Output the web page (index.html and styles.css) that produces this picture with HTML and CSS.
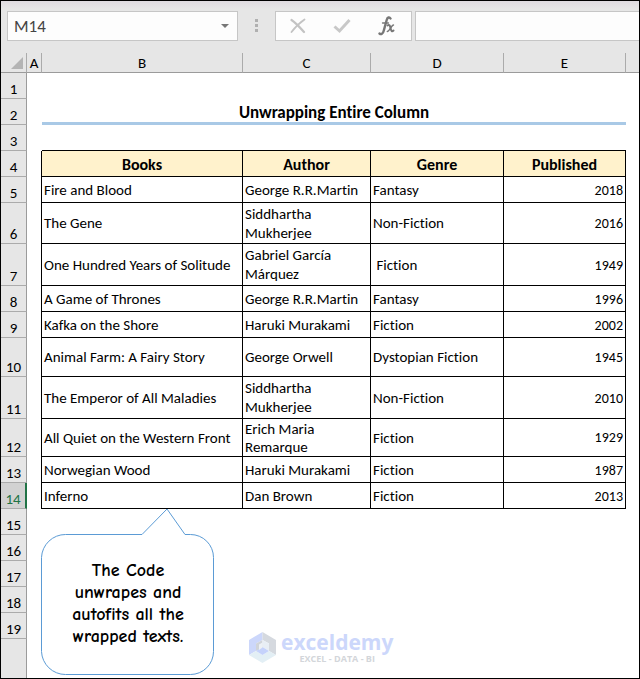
FILE: index.html
```html
<!DOCTYPE html>
<html lang="en">
<head>
<meta charset="utf-8">
<meta name="viewport" content="width=device-width, initial-scale=1">
<title>Unwrapping Entire Column</title>
<link rel="stylesheet" href="styles.css">
</head>
<body>
<main class="workbook">
  <div class="formula-bar">
    <button class="name-box" type="button" aria-label="Name box">
      <span>M14</span>
      <svg width="8" height="4" viewBox="0 0 8 4"><path d="M0 0h8L4 4z" fill="#777"/></svg>
    </button>
    <svg class="grip" width="3" height="13" viewBox="0 0 3 13"><path d="M0 0h3v3H0zM0 5h3v3H0zM0 10h3v3H0z" fill="#b0b0b0"/></svg>
    <div class="actions">
      <button type="button" aria-label="Cancel"><svg width="16" height="16" viewBox="0 0 16 16" fill="none" stroke="#c3c3c3" stroke-linecap="round"><path d="M1.500 2C6 5 10 9.500 14 14" stroke-width="2.200"/><path d="M14.500 1.500C10 4.500 5 9.500 1.500 14" stroke-width="1.800"/></svg></button>
      <button type="button" aria-label="Enter"><svg width="18" height="16" viewBox="0 0 18 16" fill="none" stroke="#c8c8c8"><path d="M1.500 8.500L6.500 13L16.500 2" stroke-width="3"/></svg></button>
      <button type="button" aria-label="Insert function"><svg width="17" height="20" viewBox="0 0 17 20" fill="none" stroke="#777" stroke-linecap="round"><path d="M12.500 2.500C11.500.800 9.500 1 8.700 4L5.800 14.500C5 18 3 18.800 1.500 17.500" stroke-width="2.400"/><path d="M4.500 7H10.500" stroke-width="1.300"/><path d="M9.500 9.500C11.500 8 12 10 12.500 12C13 15 14 16 15.500 14.500" stroke-width="2"/><path d="M15.500 9C13.500 9 11.500 15.500 9.300 15.500" stroke-width="1.400"/></svg></button>
    </div>
    <input class="formula" type="text" aria-label="Formula">
  </div>

  <table class="sheet">
    <colgroup><col class="w-num"><col class="w-a"><col class="w-b"><col class="w-c"><col class="w-d"><col class="w-e"><col></colgroup>
    <thead>
      <tr>
        <th class="corner"><svg width="12" height="12" viewBox="0 0 12 12"><path d="M12 0v12H0z" fill="#b4b4b4"/></svg></th>
        <th scope="col">A</th><th scope="col">B</th><th scope="col">C</th><th scope="col">D</th><th scope="col">E</th><th class="last"></th>
      </tr>
    </thead>
    <tbody>
      <tr><th scope="row">1</th><td colspan="6"></td></tr>
      <tr><th scope="row">2</th><td></td><td class="title" colspan="4">Unwrapping Entire Column</td><td></td></tr>
      <tr><th scope="row">3</th><td></td><td class="edge" colspan="4"></td><td></td></tr>
      <tr class="fields"><th scope="row">4</th><td class="side"></td><td>Books</td><td>Author</td><td>Genre</td><td>Published</td></tr>
      <tr class="data"><th scope="row">5</th><td class="side"></td><td>Fire and Blood</td><td>George R.R.Martin</td><td>Fantasy</td><td>2018</td></tr>
      <tr class="data double"><th scope="row">6</th><td class="side"></td><td>The Gene</td><td>Siddhartha<br>Mukherjee</td><td>Non-Fiction</td><td>2016</td></tr>
      <tr class="data tall"><th scope="row">7</th><td class="side"></td><td>One Hundred Years of Solitude</td><td>Gabriel García<br>Márquez</td><td>&nbsp;Fiction</td><td>1949</td></tr>
      <tr class="data"><th scope="row">8</th><td class="side"></td><td>A Game of Thrones</td><td>George R.R.Martin</td><td>Fantasy</td><td>1996</td></tr>
      <tr class="data"><th scope="row">9</th><td class="side"></td><td>Kafka on the Shore</td><td>Haruki Murakami</td><td>Fiction</td><td>2002</td></tr>
      <tr class="data mid"><th scope="row">10</th><td class="side"></td><td>Animal Farm: A Fairy Story</td><td>George Orwell</td><td>Dystopian Fiction</td><td>1945</td></tr>
      <tr class="data tall"><th scope="row">11</th><td class="side"></td><td>The Emperor of All Maladies</td><td>Siddhartha<br>Mukherjee</td><td>Non-Fiction</td><td>2010</td></tr>
      <tr class="data snug"><th scope="row">12</th><td class="side"></td><td>All Quiet on the Western Front</td><td>Erich Maria<br>Remarque</td><td>Fiction</td><td>1929</td></tr>
      <tr class="data"><th scope="row">13</th><td class="side"></td><td>Norwegian Wood</td><td>Haruki Murakami</td><td>Fiction</td><td>1987</td></tr>
      <tr class="data"><th scope="row" class="active">14</th><td class="side"></td><td>Inferno</td><td>Dan Brown</td><td>Fiction</td><td>2013</td></tr>
      <tr><th scope="row">15</th><td></td>
        <td class="anchor" colspan="5">
          <div class="callout">
            <svg class="outline" width="174" height="168" viewBox="0 0 174 168"><path d="M24.500 25.500H101L126 0L144 25.500H149.500A23 23 0 0 1 172.500 48.500V142.500A23 23 0 0 1 149.500 165.500H24.500A24 24 0 0 1 .500 142.500V48.500A24 24 0 0 1 24.500 25.500Z" fill="#fff" stroke="#5b9bd5"/></svg>
            <p>The Code<br>unwrapes and<br>autofits all the<br>wrapped texts.</p>
          </div>
          <div class="brand">
            <svg width="27" height="31" viewBox="0 0 27 31"><path d="M13.500 0L0 8V23L7 19V11.500L13.500 8Z" fill="#ccd7fb"/><path d="M13.500 0L27 8V23L20 19V11.500L13.500 8Z" fill="#d5d9df"/><path d="M0 23L7 19L13.500 23L20 19L27 23L13.500 31Z" fill="#e3eff5"/><path d="M7 11.500L13.500 8V16L7 19Z" fill="#d0d4da"/><path d="M13.500 8L20 11.500V19L13.500 15Z" fill="#e8eef5"/><path d="M7 19L13.500 15L20 19L13.500 23Z" fill="#c5d2fb"/><path d="M10 12.500L13.500 10.500V15.500L10 18Z" fill="#edf1f6"/></svg>
            <div class="brand-text"><strong>exceldemy</strong><small>EXCEL - DATA - BI</small></div>
          </div>
        </td></tr>
      <tr><th scope="row">16</th><td colspan="6"></td></tr>
      <tr><th scope="row">17</th><td colspan="6"></td></tr>
      <tr><th scope="row">18</th><td colspan="6"></td></tr>
      <tr><th scope="row">19</th><td colspan="6"></td></tr>
      <tr class="rest"><th></th><td colspan="6"></td></tr>
    </tbody>
  </table>
</main>
</body>
</html>
```
FILE: styles.css
```css
* { box-sizing: border-box; }

body {
  margin: 0;
  background: #fff;
  color: #000;
  font: 15px/19px Calibri, Carlito, Lato, sans-serif;
  font-variant-ligatures: none;
}

.workbook {
  min-height: 100vh;
  border: 1px solid #000;
}

/* Formula bar */
.formula-bar {
  display: flex;
  height: 52px;
  padding: 10px 0 12px 6px;
  background: linear-gradient(#dfdbe0, #e6e6e6 8px);
}

.formula-bar button {
  border: 0;
  padding: 0;
  background: none;
  font: inherit;
}

.formula-bar .name-box {
  display: flex;
  flex: 0 0 231px;
  align-items: center;
  justify-content: space-between;
  padding: 0 8px 0 6px;
  border: 1px solid #c6c6c6;
  background: #fdfdfd;
  color: #444;
  font-size: 17px;
}

.grip { flex: none; margin: 8px 17px; }

.actions {
  display: flex;
  flex: 0 0 137px;
  align-items: center;
  justify-content: space-between;
  padding: 0 16px 0 14px;
  border: 1px solid #c6c6c6;
  background: #fdfdfd;
}

.actions button { display: flex; }

.formula {
  flex: 1;
  min-width: 0;
  margin-left: 3px;
  border: 1px solid #c6c6c6;
  border-right: 0;
  background: #fdfdfd;
}

/* Sheet */
.sheet {
  width: 100%;
  table-layout: fixed;
  border-collapse: separate;
  border-spacing: 0;
}

.w-num { width: 26px; }
.w-a { width: 15px; }
.w-b { width: 201px; }
.w-c { width: 128px; }
.w-d { width: 133px; }
.w-e { width: 122px; }

td, th { padding: 0; }

tr { height: 26px; }
.double { height: 41px; }
.tall { height: 42px; }
.mid, .rest { height: 39px; }
.snug { height: 38px; line-height: 18px; }

thead tr { height: 20px; }

th {
  border-right: 1px solid #9b9b9b;
  border-bottom: 1px solid #ababab;
  background: #e6e6e6;
  font-size: 15px;
  font-weight: 400;
  line-height: 17px;
  vertical-align: bottom;
}

thead th {
  border-right-color: #ababab;
  border-bottom-color: #9b9b9b;
}

thead .last { border-right: 0; }

.corner svg { display: block; margin: 0 3px 3px auto; }

tbody .active {
  border-right: 2px solid #217346;
  background: #d2d2d2;
  color: #217346;
}

.rest th { border-bottom: 0; }

.title {
  border-bottom: 3px solid #a9c9e6;
  font-size: 17px;
  font-weight: 700;
  text-align: center;
  vertical-align: bottom;
}

.edge { border-bottom: 1px solid #000; }

.fields td, .data td {
  border-right: 1px solid #000;
  border-bottom: 1px solid #000;
  padding: 1px 2px 0;
  white-space: nowrap;
}

.fields td {
  background: #fff2cc;
  font-size: 16px;
  font-weight: 700;
  text-align: center;
}

.fields .side, .data .side {
  border-bottom: 0;
  background: none;
}

.data td:last-child {
  font-size: 14px;
  text-align: right;
}

/* Objects floating over the cells */
.anchor { position: relative; }

.callout {
  position: absolute;
  top: 0;
  left: -1px;
  width: 174px;
  padding: 51px 0 24px;
}

.outline { position: absolute; top: 0; left: 0; }

.callout p {
  position: relative;
  margin: 0;
  font: 700 18px/22px "Comic Sans MS", "Comic Neue", "Open Sans", cursive;
  text-align: center;
}

.brand {
  position: absolute;
  top: 122px;
  left: 207px;
  display: flex;
  align-items: center;
  gap: 5px;
}

.brand-text {
  display: flex;
  flex-direction: column;
  align-items: center;
  font-family: "Open Sans", sans-serif;
}

.brand strong {
  color: #ccd7fb;
  font-size: 21px;
  line-height: 22px;
}

.brand small {
  color: #d3d6da;
  font-size: 9px;
  font-weight: 700;
  line-height: 11px;
}
```
